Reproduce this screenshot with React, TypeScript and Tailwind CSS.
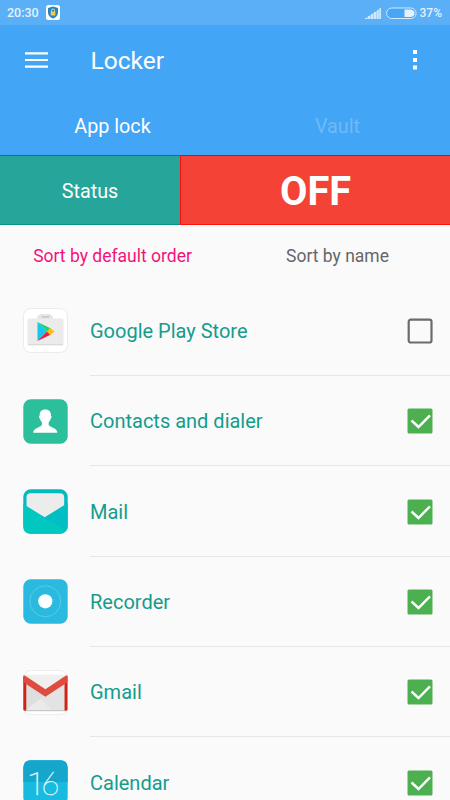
import React from "react";

const PlayStoreIcon = () => (
  <svg viewBox="0 0 45 45" className="block size-[45px]">
    <rect x=".5" y=".5" width="44" height="44" rx="7.5" fill="#fff" stroke="#ececec" />
    <path d="M14 11V9l3-3h10l3 3v2Z" fill="#e6e6e6" />
    <rect x="18.500" y="8" width="8" height="1.700" rx=".8" fill="#c9c9c9" />
    <rect x="4.500" y="10.500" width="36" height="26.500" rx="1.500" fill="#ebebeb" />
    <path d="M5 36.800H40" stroke="#d4d4d4" />
    <path d="M14.500 14v19L24 23.500Z" fill="#19c5f0" />
    <path d="M14.500 14 28 20.500 24 23.500Z" fill="#1fd07c" />
    <path d="M14.500 33 28 26.500 24 23.500Z" fill="#e5213f" />
    <path d="m27 20 4.500 3.500L27 27l-3-3.500Z" fill="#fdbb17" />
  </svg>
);

const ContactsIcon = () => (
  <svg viewBox="0 0 45 45" className="block size-[45px]">
    <rect x=".3" y=".3" width="44.400" height="44.400" rx="7.500" fill="#2cbf9c" />
    <path
      d="M22.300 10.500c-3.900 0-5.900 2.600-5.700 6.200-.9.300-.6 2.800.5 3.300.3 1.500 1 2.500 1.800 3.200v2.800c-1.200 2.600-8.600 2.600-8.600 7.800h24c0-5.200-7.400-5.200-8.600-7.800v-2.800c.8-.7 1.500-1.700 1.800-3.200 1.100-.5 1.400-3 .5-3.300.2-3.600-1.800-6.200-5.700-6.200Z"
      fill="#fff"
    />
  </svg>
);

const MailIcon = () => (
  <svg viewBox="0 0 45 45" className="block size-[45px]">
    <rect x=".3" y=".3" width="44.400" height="44.400" rx="7.500" fill="#00bbc0" />
    <path d="M3.500 19V8.500q0-4.200 4.200-4.200h29q4.500 0 4.500 4.200V19L22 28.500Z" fill="#ececec" />
    <path d="M.3 15 21.700 28.300l21.300 13.700q-2 2.700-5.800 2.700H7.800q-7.500 0-7.500-7.500Z" fill="#00c8c1" />
    <path d="M21.700 28.300 44.700 14v23.200q0 2.800-1.700 4.800Z" fill="#00bfc3" />
  </svg>
);

const RecorderIcon = () => (
  <svg viewBox="0 0 45 45" className="block size-[45px]">
    <rect x=".3" y=".3" width="44.400" height="44.400" rx="7.500" fill="#2abadf" />
    <circle cx="22.300" cy="22.300" r="15.500" fill="none" stroke="#65cee9" strokeWidth=".8" />
    <circle cx="22.300" cy="22.300" r="7.100" fill="#fff" />
  </svg>
);

const GmailIcon = () => (
  <svg viewBox="0 0 45 45" className="block size-[45px]">
    <rect x=".5" y=".5" width="44" height="44" rx="7.500" fill="#fff" stroke="#ededed" />
    <path d="M2 4.700h41v36H2Z" fill="#efefef" />
    <path d="M3 12v28L22 25.500Z" fill="#dedede" />
    <path d="M3 40 22 25.500 41 40Z" fill="#eaeaea" />
    <path d="m18 28.500 10 11.500h13V13L22.300 26Z" fill="#e3e3e3" />
    <path d="M1 40.700h43" stroke="#bdbdbd" />
    <path d="M.3 6v33.500q0 1 1 1h2V12ZM44.500 6v33.500q0 1-1 1h-2V12Z" fill="#cf2418" />
    <path d="M.3 5.500h1.500L22.400 19.300 43 5.500h1.500v6.800L22.400 26.700.3 12.300Z" fill="#df4b3f" />
  </svg>
);

const CalendarIcon = () => (
  <svg viewBox="0 0 45 45" className="block size-[45px]">
    <rect x=".3" y=".3" width="44.400" height="44.400" rx="7.500" fill="#18bbdf" />
    <path d="M.3 22V7.800Q.3.300 7.800.3h29.400q7.500 0 7.500 7.500V22Z" fill="#17a6cb" />
    <text y="34.800" fontSize="32" fontWeight="100" strokeWidth=".45" className="fill-[#e9f9fd] stroke-[#e9f9fd]">
      <tspan x="4.200" className="font-['Roboto',sans-serif]">1</tspan>
      <tspan x="18" className="font-['Lato',sans-serif]">6</tspan>
    </text>
  </svg>
);

const apps = [
  { name: "Google Play Store", Icon: PlayStoreIcon, locked: false },
  { name: "Contacts and dialer", Icon: ContactsIcon, locked: true },
  { name: "Mail", Icon: MailIcon, locked: true },
  { name: "Recorder", Icon: RecorderIcon, locked: true },
  { name: "Gmail", Icon: GmailIcon, locked: true },
  { name: "Calendar", Icon: CalendarIcon, locked: true },
];

const Checkbox = ({ checked }: { checked: boolean }) => (
  <svg viewBox="0 0 26 26" className="block size-[26px]" role="checkbox" aria-checked={checked}>
    {checked ? (
      <>
        <rect x=".5" y=".5" width="25" height="25" rx="1.500" fill="#4caf50" />
        <path d="m4.500 12.500 7 6.500L23 7.300" fill="none" stroke="#fff" strokeWidth="2.400" />
      </>
    ) : (
      <rect x="1.700" y="1.700" width="22.800" height="22.800" rx="2" fill="none" stroke="#6b6b6b" strokeWidth="2.200" />
    )}
  </svg>
);

export default function App() {
  return (
    <div className="flex h-[800px] w-[450px] flex-col overflow-hidden bg-[#fafafa] font-['Roboto',sans-serif]">
      <div className="flex h-[25px] shrink-0 items-center bg-[#5aaff7] pr-2 pl-[7px] text-[12.500px] font-medium text-[#e4f2fe]">
        <span className="w-[39px] pt-px">20:30</span>
        <svg viewBox="0 0 14 15" className="h-[15px] w-[14px]">
          <rect width="14" height="15" rx="2.500" fill="#fff" />
          <path d="M7 1.500 12 3v4.500q0 4-5 6-5-2-5-6V3Z" fill="#2784bd" />
          <path d="M5.500 7V5.500q0-1.500 1.500-1.500t1.500 1.500V7" fill="none" stroke="#e8d9a5" />
          <rect x="4.700" y="6.500" width="4.600" height="4" fill="#f4c65c" />
        </svg>
        <svg viewBox="0 0 16 11" className="mt-px ml-auto h-[11px] w-4">
          <path d="M0 10h2v1H0ZM3 8h2v3H3ZM6 6h2v5H6ZM9 4h2v7H9ZM12 2h1.500v9H12ZM14.500 0H16v11h-1.500Z" fill="#cde7fd" />
          <path d="M0 10.500 16 0v11H0Z" fill="#cde7fd" opacity=".6" />
        </svg>
        <svg viewBox="0 0 31 12" className="ml-[5px] h-3 w-[31px]">
          <rect x=".6" y="1" width="29.500" height="10.500" rx="5.200" fill="#48a6f6" stroke="#d4eafd" />
          <path d="M18.500 2.500h6.300q3.800.4 3.800 3.800T24.800 10h-6.300Z" fill="#e4f2fe" />
        </svg>
        <span className="ml-[3px] text-[12px]">37%</span>
      </div>

      <header className="h-[130px] shrink-0 bg-[#42a5f5] text-white">
        <div className="flex h-[71px] items-center pl-[25px]">
          <svg viewBox="0 0 23 16" className="-mt-px h-4 w-[23px]">
            <path d="M0 1.300h23M0 8h23M0 14.700h23" stroke="#fff" strokeWidth="2.200" />
          </svg>
          <h1 className="ml-[42.500px] pt-0.5 text-[24.500px] font-normal">Locker</h1>
          <svg viewBox="0 0 4 20" className="-mt-px mr-[33px] ml-auto h-5 w-1">
            <path d="M0 0h4v4H0ZM0 8h4v4H0ZM0 15.500h4v4H0Z" fill="#fff" />
          </svg>
        </div>
        <nav className="grid h-[59px] grid-cols-2 items-center pt-0.5 text-center text-[19.800px]">
          <span>App lock</span>
          <span className="text-[#6fbaf7]">Vault</span>
        </nav>
      </header>

      <section className="flex h-[70px] shrink-0 text-center text-white">
        <div className="flex w-[180px] items-center justify-center border-t border-b border-t-[#19756c] border-b-[#009688] bg-[#26a69a] pt-[3px] text-[19.800px]">Status</div>
        <div className="flex flex-1 items-center justify-center border-t border-b border-l border-t-[#b71c1c] border-b-[#ff1008] border-l-[#ff1008] bg-[#f44336] pt-1 text-[39.800px] leading-none font-bold">OFF</div>
      </section>

      <section className="grid h-[60px] shrink-0 grid-cols-2 items-center pt-0.5 text-center text-[17.500px]">
        <span className="text-[#f3127b]">Sort by default order</span>
        <span className="text-[#666666]">Sort by name</span>
      </section>

      <main className="pt-[0.700px]">
        {apps.map(({ name, Icon, locked }) => (
          <div key={name} className="flex h-[90.350px] items-center pl-[22.500px]">
            <Icon />
            <div className="ml-[22.500px] flex h-full flex-1 items-center justify-between border-b border-[#e6e6e6] pt-px pr-[17px]">
              <span className="text-[20px] text-[#159c8c]">{name}</span>
              <Checkbox checked={locked} />
            </div>
          </div>
        ))}
      </main>
    </div>
  );
}
